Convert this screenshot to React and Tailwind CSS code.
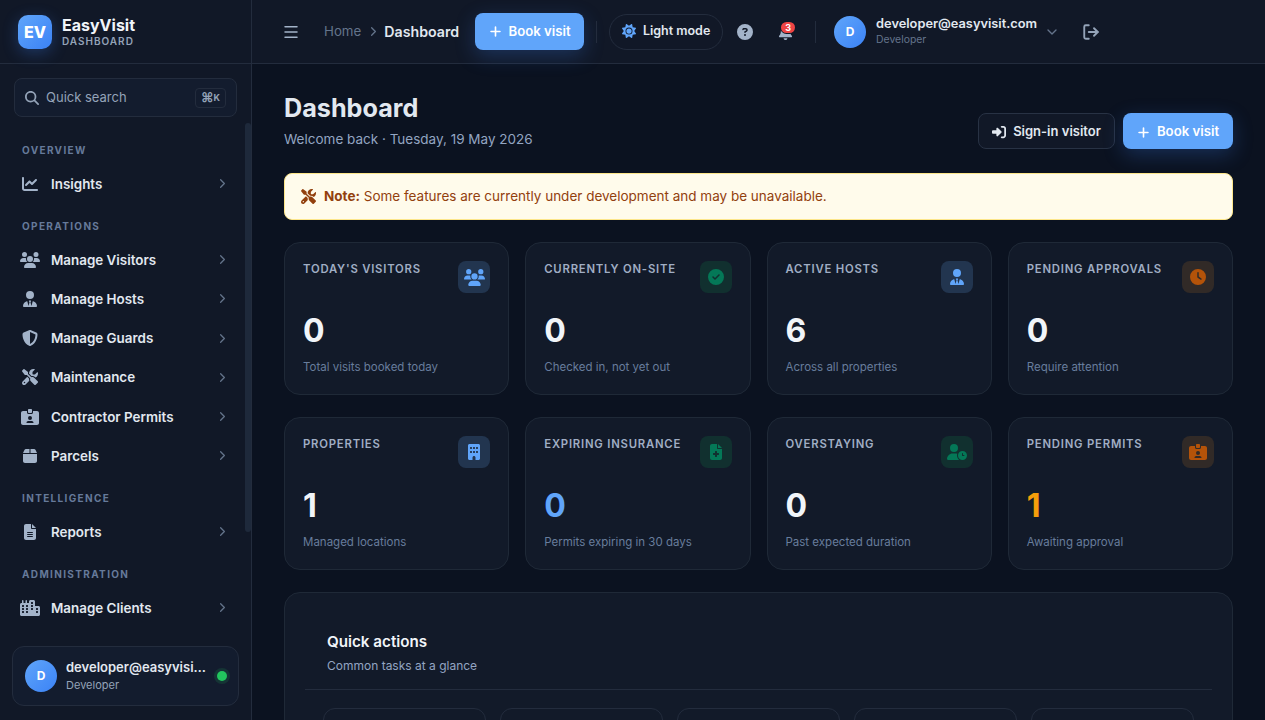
import React from "react";
import {
  FaBell,
  FaBox,
  FaBuilding,
  FaChartLine,
  FaCircleCheck,
  FaCircleQuestion,
  FaCity,
  FaClock,
  FaFileLines,
  FaFileMedical,
  FaIdCardClip,
  FaMagnifyingGlass,
  FaPlus,
  FaRightToBracket,
  FaScrewdriverWrench,
  FaShieldHalved,
  FaSun,
  FaUserClock,
  FaUsers,
  FaUserTie,
} from "react-icons/fa6";
import { ChevronDown, ChevronRight, LogOut, Menu } from "lucide-react";

const NAV = [
  { label: "OVERVIEW", items: [{ name: "Insights", icon: FaChartLine, size: 16 }] },
  {
    label: "OPERATIONS",
    items: [
      { name: "Manage Visitors", icon: FaUsers, size: 20 },
      { name: "Manage Hosts", icon: FaUserTie, size: 16 },
      { name: "Manage Guards", icon: FaShieldHalved, size: 16 },
      { name: "Maintenance", icon: FaScrewdriverWrench, size: 16 },
      { name: "Contractor Permits", icon: FaIdCardClip, size: 18 },
      { name: "Parcels", icon: FaBox, size: 16 },
    ],
  },
  { label: "INTELLIGENCE", items: [{ name: "Reports", icon: FaFileLines, size: 16 }] },
  { label: "ADMINISTRATION", items: [{ name: "Manage Clients", icon: FaCity, size: 20 }] },
];

const STATS = [
  { title: "TODAY'S VISITORS", value: "0", note: "Total visits booked today", icon: FaUsers, tone: "blue", size: 21 },
  { title: "CURRENTLY ON-SITE", value: "0", note: "Checked in, not yet out", icon: FaCircleCheck, tone: "green", size: 16 },
  { title: "ACTIVE HOSTS", value: "6", note: "Across all properties", icon: FaUserTie, tone: "blue", size: 16 },
  { title: "PENDING APPROVALS", value: "0", note: "Require attention", icon: FaClock, tone: "orange", size: 16 },
  { title: "PROPERTIES", value: "1", note: "Managed locations", icon: FaBuilding, tone: "blue", size: 16 },
  { title: "EXPIRING INSURANCE", value: "0", valueClass: "text-[#60a5fa]", note: "Permits expiring in 30 days", icon: FaFileMedical, tone: "green", size: 16 },
  { title: "OVERSTAYING", value: "0", note: "Past expected duration", icon: FaUserClock, tone: "green", size: 20 },
  { title: "PENDING PERMITS", value: "1", valueClass: "text-[#f59e0b]", note: "Awaiting approval", icon: FaIdCardClip, tone: "orange", size: 18 },
];

const TONES = {
  blue: "bg-[#22354f] text-[#60a5fa]",
  green: "bg-[#11302f] text-[#047857]",
  orange: "bg-[#312a27] text-[#b45309]",
};

function Avatar() {
  return (
    <div className="flex h-8 w-8 shrink-0 items-center justify-center rounded-full bg-gradient-to-br from-[#60a5fa] to-[#3b82f6] text-xs font-bold text-white">
      D
    </div>
  );
}

function BookVisit({ className }) {
  return (
    <button className={`flex items-center justify-center gap-[7px] rounded-lg bg-[#60a5fa] text-[13.2px] font-semibold text-white shadow-[0_6px_20px_rgba(59,130,246,0.25)] ${className}`}>
      <FaPlus size={13} />
      Book visit
    </button>
  );
}

function Sidebar() {
  return (
    <aside className="relative flex h-full w-[252px] shrink-0 flex-col border-r border-[#232c3d] bg-[#111827]">
      <div className="flex h-16 shrink-0 items-center gap-[10px] border-b border-[#232c3d] pl-[18px]">
        <div className="flex h-[34px] w-[34px] items-center justify-center rounded-[10px] bg-gradient-to-br from-[#60a5fa] to-[#3b82f6] text-base font-extrabold text-white shadow-[0_4px_16px_rgba(59,130,246,0.3)]">
          EV
        </div>
        <div>
          <div className="text-base font-bold leading-[18px] text-[#f1f5f9]">EasyVisit</div>
          <div className="text-[10px] font-semibold leading-[14px] tracking-[1px] text-[#94a3b8]">DASHBOARD</div>
        </div>
      </div>

      <div className="mx-[14px] mt-[14px] flex h-[39px] shrink-0 items-center rounded-lg border border-[#232c3d] bg-[#131c2e] pl-[10px] pr-[10px]">
        <FaMagnifyingGlass size={14} className="text-[#94a3b8]" />
        <span className="ml-[7px] text-[13px] text-[#94a3b8]">Quick search</span>
        <span className="ml-auto flex h-5 w-[31px] items-center justify-center rounded border border-[#232c3d] font-bold text-[#94a3b8]">
          <span className="text-[13px] leading-none">⌘</span>
          <span className="text-[9px] leading-none">K</span>
        </span>
      </div>

      <nav className="mt-[26px] flex-1 overflow-hidden pl-[8px] pr-[21px]">
        {NAV.map((group) => (
          <div key={group.label} className="mb-[15.75px]">
            <div className="h-[14px] pl-[14px] text-[10px] font-bold leading-[14px] tracking-[1.35px] text-[#667a9a]">{group.label}</div>
            <div className="mt-[7px]">
              {group.items.map((item) => (
                <div key={item.name} className="flex h-[39.25px] items-center text-[13.4px] font-semibold text-[#e2e8f0]">
                  <span className="flex w-[43px] shrink-0 justify-center pl-[1px] text-[#a3b3c9]">
                    <item.icon size={item.size} />
                  </span>
                  <span>{item.name}</span>
                  <ChevronRight size={15} className="ml-auto text-[#64748b]" />
                </div>
              ))}
            </div>
          </div>
        ))}
      </nav>

      <div className="absolute right-0 top-[123px] h-[409px] w-[6px] rounded-full bg-[#1e293b]" />

      <div className="mx-3 mb-[14px] mt-auto flex h-[60px] shrink-0 items-center rounded-xl border border-[#232c3d] bg-[#131c2e] pl-3">
        <Avatar />
        <div className="ml-[9px] w-[141px] min-w-0">
          <div className="truncate text-[13px] font-semibold leading-[18px] text-[#e2e8f0]">developer@easyvisit.com</div>
          <div className="text-[11px] leading-[18px] text-[#94a3b8]">Developer</div>
        </div>
        <span className="ml-[10px] h-[10px] w-[10px] rounded-full bg-[#22c55e] shadow-[0_0_0_3px_rgba(34,197,94,0.15)]" />
      </div>
    </aside>
  );
}

function Topbar() {
  return (
    <header className="flex h-16 shrink-0 items-center border-b border-[#232c3d] bg-[#111827] pl-[30px]">
      <Menu size={18} className="text-[#a3b3c9]" strokeWidth={2} />
      <span className="ml-[24px] text-[13.3px] text-[#64748b]">Home</span>
      <ChevronRight size={15} className="ml-[5px] text-[#64748b]" />
      <span className="ml-[3px] text-[14.2px] font-semibold text-[#e2e8f0]">Dashboard</span>
      <BookVisit className="ml-4 h-[37px] w-[109px]" />
      <div className="ml-3 h-[22px] w-px bg-[#232c3d]" />
      <button className="ml-3 flex h-9 w-[114px] items-center justify-center gap-[7px] rounded-full border border-[#232c3d] pb-[1px] text-[12.5px] font-semibold text-[#e2e8f0]">
        <FaSun size={14} className="text-[#60a5fa]" />
        Light mode
      </button>
      <FaCircleQuestion size={16} className="ml-[14px] text-[#a3b3c9]" />
      <div className="relative ml-[25px] mt-[2px]">
        <FaBell size={15} className="text-[#a3b3c9]" />
        <span className="absolute -right-[2px] -top-[3px] flex h-[11px] w-[14px] items-center justify-center rounded-full bg-[#ef4444] text-[9px] font-bold text-white shadow-[0_0_0_1px_#111827]">3</span>
      </div>
      <div className="ml-[22px] h-[22px] w-px bg-[#232c3d]" />
      <div className="ml-[18px]">
        <Avatar />
      </div>
      <div className="ml-[10px] w-[161px]">
        <div className="whitespace-nowrap text-[12.8px] font-semibold leading-4 text-[#e2e8f0]">developer@easyvisit.com</div>
        <div className="text-[10.4px] leading-4 text-[#64748b]">Developer</div>
      </div>
      <ChevronDown size={16} className="ml-[7px] text-[#64748b]" />
      <LogOut size={18} strokeWidth={2.5} className="ml-[22px] text-[#94a3b8]" />
    </header>
  );
}

function StatCard({ stat }) {
  const Icon = stat.icon;
  return (
    <div className="h-[153px] rounded-2xl border border-[#1f2937] bg-[#121a29] px-[18px] pt-[18px]">
      <div className="flex items-start justify-between">
        <div className="text-[11.3px] font-semibold leading-[16px] tracking-[0.8px] text-[#a0aec4]">{stat.title}</div>
        <div className={`flex h-8 w-8 items-center justify-center rounded-lg ${TONES[stat.tone]}`}>
          <Icon size={stat.size} />
        </div>
      </div>
      <div className={`mt-[16px] text-[32px] font-bold leading-[44px] ${stat.valueClass || "text-[#f1f5f9]"}`}>{stat.value}</div>
      <div className="mt-[6px] text-[11.5px] leading-4 text-[#687d9c]">{stat.note}</div>
    </div>
  );
}

export default function App() {
  return (
    <div className="flex h-screen w-full overflow-hidden bg-[#0b1220] font-['Inter',sans-serif]">
      <Sidebar />
      <div className="flex h-full min-w-0 flex-1 flex-col">
        <Topbar />
        <main className="flex-1 overflow-hidden px-8 pt-7">
          <div className="flex items-start justify-between">
            <div>
              <h1 className="text-[25.2px] font-bold leading-8 text-[#e2e8f0]">Dashboard</h1>
              <p className="mt-[5px] text-[13.5px] leading-5 text-[#93a5c2]">Welcome back · Tuesday, 19 May 2026</p>
            </div>
            <div className="mt-[21px] flex gap-2">
              <button className="flex h-9 w-[137px] items-center justify-center gap-[7px] rounded-lg border border-[#283244] bg-[#111827] pt-[2px] text-[13px] font-semibold text-[#e2e8f0]">
                <FaRightToBracket size={14} />
                Sign-in visitor
              </button>
              <BookVisit className="h-9 w-[110px] pt-[2px]" />
            </div>
          </div>

          <div className="mt-[24px] flex h-[47px] items-center rounded-lg border border-[#fde68a] bg-[#fffbeb] pl-4 text-[13.5px] text-[#92400e]">
            <FaScrewdriverWrench size={15} />
            <span className="ml-2">
              <strong className="font-bold">Note:</strong> Some features are currently under development and may be unavailable.
            </span>
          </div>

          <div className="mt-[22px] grid grid-cols-4 gap-x-4 gap-y-[22px]">
            {STATS.map((stat) => (
              <StatCard key={stat.title} stat={stat} />
            ))}
          </div>

          <section className="mt-[22px] rounded-2xl border border-[#1f2937] bg-[#121a29] px-5 pt-[39px]">
            <div className="px-[22px]">
              <h2 className="text-[15.2px] font-semibold leading-5 text-[#f1f5f9]">Quick actions</h2>
              <p className="mt-[4px] text-xs leading-5 text-[#93a5c2]">Common tasks at a glance</p>
            </div>
            <div className="mt-[13px] border-t border-[#232c3d] px-[18px] pt-[18px]">
              <div className="grid grid-cols-5 gap-[14px]">
                {[0, 1, 2, 3, 4].map((n) => (
                  <div key={n} className="h-24 rounded-xl border border-[#232c3d]" />
                ))}
              </div>
            </div>
          </section>
        </main>
      </div>
    </div>
  );
}
